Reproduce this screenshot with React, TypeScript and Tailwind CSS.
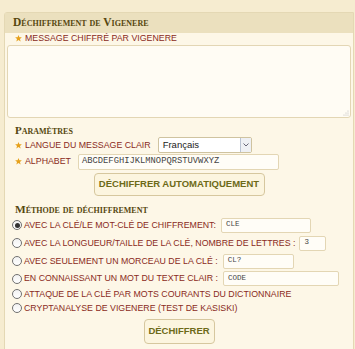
import React from "react";

const Star = () => (
  <svg width="7" height="7" viewBox="0 0 10 10" className="shrink-0">
    <polygon points="5,0 6.3,3.2 9.8,3.3 7.1,5.6 8.1,9.2 5,7.2 1.9,9.2 2.9,5.6 0.2,3.3 3.7,3.2" fill="#e6a11c" />
  </svg>
);

const Radio = ({ checked }: { checked?: boolean }) => (
  <span className="w-[10px] h-[10px] rounded-full border border-[#707070] bg-gradient-to-b from-[#f2f2f2] to-white flex items-center justify-center shrink-0 mr-[2px]">
    {checked && <span className="w-[5px] h-[5px] rounded-full bg-[#333]" />}
  </span>
);

const lbl = "text-[8.8px] text-[#8a2a22] uppercase leading-none whitespace-nowrap";
const font = { fontFamily: '"Liberation Sans", Arial, sans-serif' };
const serif = { fontFamily: '"Liberation Serif", "Times New Roman", serif', fontVariant: "small-caps" as const };
const mono = { fontFamily: '"Liberation Mono", "Courier New", monospace' };

const Inp = ({ w, v }: { w: string; v: string }) => (
  <div className={`${w} h-[15px] border border-[#e3d6b4] rounded-[2px] bg-[#fffdf7] flex items-center pl-[4px] text-[7.5px] text-[#444]`} style={mono}>
    {v}
  </div>
);

export default function App() {
  return (
    <div className="w-[355px] h-[349px] bg-[#f6ecd0] pt-[12px] pl-[4px] overflow-hidden" style={font}>
      <div className="w-[350px] h-[345px] border border-[#e4d8b4] bg-[#fdf7e7] rounded-tl-[3px]">
        <div className="h-[20px] bg-[#ebe0be] flex items-center pl-[8px]">
          <span className="text-[11.5px] font-bold text-[#56470f] leading-none" style={serif}>
            Déchiffrement de Vigenere
          </span>
        </div>
        <div className="h-[11px] flex items-center pl-[10px] gap-[3px]">
          <Star />
          <span className={lbl}>Message chiffré par Vigenere</span>
        </div>
        <div className="mx-[2px] mt-[1px] h-[73px] border border-[#e3d6b4] rounded-[3px] bg-[#fffcf4] relative">
          <svg width="6" height="6" viewBox="0 0 6 6" className="absolute right-[1px] bottom-[1px]">
            <circle cx="5" cy="1" r="0.6" fill="#bbb" />
            <circle cx="3" cy="3" r="0.6" fill="#bbb" />
            <circle cx="5" cy="3" r="0.6" fill="#bbb" />
            <circle cx="1" cy="5" r="0.6" fill="#bbb" />
            <circle cx="3" cy="5" r="0.6" fill="#bbb" />
            <circle cx="5" cy="5" r="0.6" fill="#bbb" />
          </svg>
        </div>
        <div className="h-[12px] mt-[6px] flex items-center pl-[10px]">
          <span className="text-[11px] font-bold text-[#56470f] leading-none" style={serif}>Paramètres</span>
        </div>
        <div className="h-[16px] mt-[1px] flex items-center pl-[10px]">
          <Star />
          <span className={`${lbl} ml-[3px]`}>Langue du message clair</span>
          <div className="ml-[7px] w-[94px] h-[16px] border border-[#cfc3a0] rounded-[2px] bg-white flex items-center justify-between pl-[4px]">
            <span className="text-[9.5px] text-[#222]">Français</span>
            <span className="w-[11px] h-[14px] border-l border-[#b9c3d3] bg-[#eef0f4] flex items-center justify-center">
              <svg width="6" height="4" viewBox="0 0 6 4"><path d="M0.5 0.5 L3 3 L5.5 0.5" stroke="#667" fill="none" strokeWidth="1" /></svg>
            </span>
          </div>
        </div>
        <div className="h-[17px] flex items-center pl-[10px]">
          <Star />
          <span className={`${lbl} ml-[3px]`}>Alphabet</span>
          <div className="ml-[7px] w-[201px] h-[16px] border border-[#e3d6b4] rounded-[2px] bg-[#fffdf7] flex items-center pl-[3px] text-[8.8px] text-[#444]" style={mono}>
            ABCDEFGHIJKLMNOPQRSTUVWXYZ
          </div>
        </div>
        <div className="flex justify-center mt-[3px]">
          <div className="w-[171px] h-[23px] border border-[#d6c79e] rounded-[4px] bg-[#fcf5df] flex items-center justify-center text-[9.5px] font-bold text-[#6d6a18] uppercase">
            Déchiffrer automatiquement
          </div>
        </div>
        <div className="h-[12px] mt-[8px] flex items-center pl-[10px]">
          <span className="text-[11.3px] font-bold text-[#56470f] leading-none" style={serif}>Méthode de déchiffrement</span>
        </div>
        <div className="pl-[7px]">
          <div className="h-[18px] flex items-center">
            <Radio checked />
            <span className={lbl}>Avec la clé/le mot-clé de chiffrement:</span>
            <span className="ml-[5px]"><Inp w="w-[90px]" v="CLE" /></span>
          </div>
          <div className="h-[18px] flex items-center">
            <Radio />
            <span className={lbl}>Avec la longueur/taille de la clé, nombre de lettres :</span>
            <span className="ml-[4px]"><Inp w="w-[27px]" v="3" /></span>
          </div>
          <div className="h-[18px] flex items-center">
            <Radio />
            <span className={lbl}>Avec seulement un morceau de la clé :</span>
            <span className="ml-[5px]"><Inp w="w-[71px]" v="CL?" /></span>
          </div>
          <div className="h-[17px] flex items-center">
            <Radio />
            <span className={lbl}>En connaissant un mot du texte clair :</span>
            <span className="ml-[5px]"><Inp w="w-[116px]" v="CODE" /></span>
          </div>
          <div className="h-[14px] flex items-center">
            <Radio />
            <span className={lbl}>Attaque de la clé par mots courants du dictionnaire</span>
          </div>
          <div className="h-[14px] flex items-center">
            <Radio />
            <span className={lbl}>Cryptanalyse de Vigenere (test de Kasiski)</span>
          </div>
        </div>
        <div className="flex justify-center mt-[4px]">
          <div className="w-[71px] h-[25px] border border-[#d6c79e] rounded-[4px] bg-[#fcf5df] flex items-center justify-center text-[9.5px] font-bold text-[#6d6a18] uppercase">
            Déchiffrer
          </div>
        </div>
      </div>
    </div>
  );
}
